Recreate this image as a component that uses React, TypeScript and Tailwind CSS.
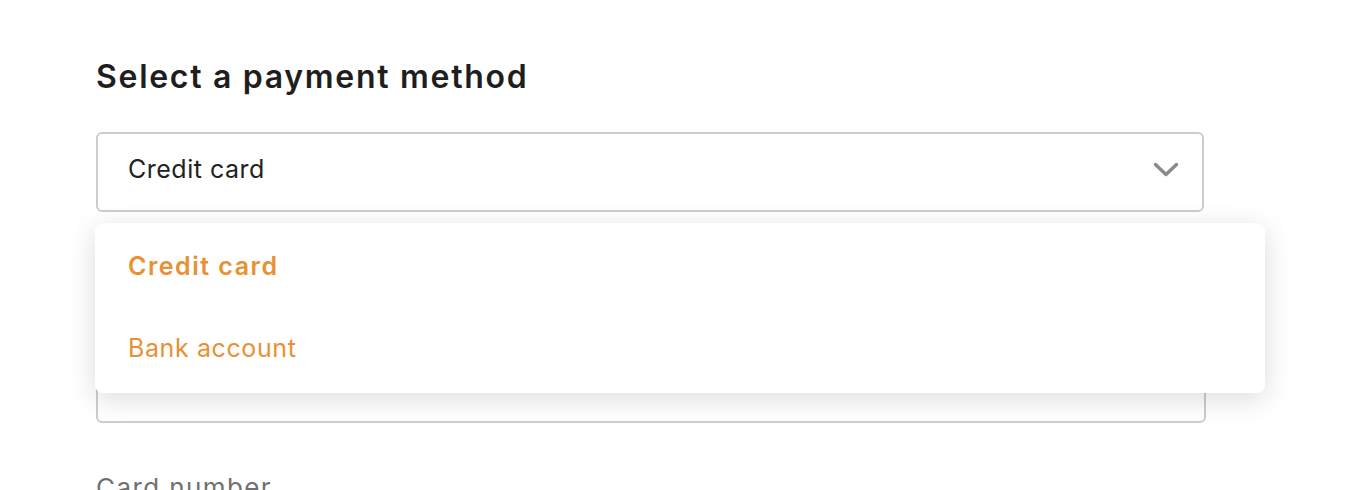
import React from "react";

export default function App() {
  return (
    <div
      className="h-[490px] w-full overflow-hidden bg-white"
      style={{ fontFamily: "Inter, 'Noto Sans', sans-serif" }}
    >
      <div className="relative w-[1110px] ml-[96px] pt-[59px]">
        <h2 className="text-[32px] leading-[36px] font-semibold tracking-[1.7px] text-[#1e1e1e]">
          Select a payment method
        </h2>

        <div className="relative mt-[37px]">
          <div className="flex h-[80px] w-[1108px] items-center justify-between rounded-[6px] border-2 border-[#cdcdcd] bg-white pb-[4px] pl-[30px] pr-[23px]">
            <span className="text-[25px] tracking-[0.5px] text-[#222222]">Credit card</span>
            <svg width="26" height="16" viewBox="0 0 26 16" fill="none">
              <path
                d="M2.5 2.5 L13 12.5 L23.5 2.5"
                stroke="#8a8a8a"
                strokeWidth="3.4"
                strokeLinecap="round"
                strokeLinejoin="round"
              />
            </svg>
          </div>

          <div className="absolute left-[-1px] top-[91px] z-10 w-[1170px] rounded-[8px] bg-white py-[3px] shadow-[0_6px_28px_rgba(0,0,0,0.14)]">
            <div className="flex h-[82px] items-center pl-[33px] text-[25px] font-semibold tracking-[1.5px] text-[#e99132]">
              Credit card
            </div>
            <div className="flex h-[82px] items-center pl-[33px] text-[25px] tracking-[0.6px] text-[#e99132]">
              Bank account
            </div>
          </div>
        </div>

        <div className="mt-[131px] h-[80px] w-[1110px] rounded-[6px] border-2 border-[#cdcdcd] bg-white" />

        <div className="mt-[49px] text-[26px] leading-[32px] tracking-[1.4px] text-[#707070]">
          Card number
        </div>
      </div>
    </div>
  );
}
